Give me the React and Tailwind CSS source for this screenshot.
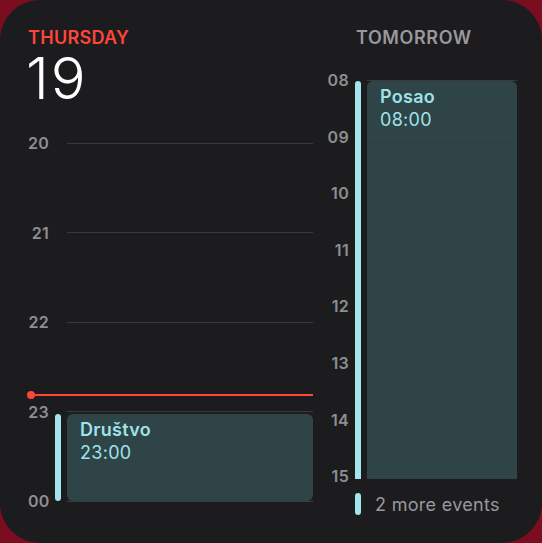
import React from 'react';

const leftHours = ['20', '21', '22', '23', '00'];
const rightHours = ['08', '09', '10', '11', '12', '13', '14', '15'];

const HourRow = ({ label, height, labelWidth, gap, isLast }) => (
  <div className={isLast ? 'h-[20px]' : height}>
    <div className="h-[20px] flex items-center">
      <span
        className={`${labelWidth} text-right text-[16px] font-semibold text-[#8e8e93] leading-none tracking-[0.3px]`}
      >
        {label}
      </span>
      <div className={`flex-1 h-px bg-[#3a3a3c] ${gap}`} />
    </div>
  </div>
);

const EventBlock = ({ title, time, className, barClass, boxClass }) => (
  <div className={`absolute flex ${className}`}>
    <div className={`w-[6px] bg-[#a2e5ec] ${barClass}`} />
    <div className={`flex-1 ml-[6px] bg-[#31494b]/90 pl-[13px] pt-[4px] ${boxClass}`}>
      <div className="text-[18px] leading-[23px] font-semibold tracking-[0.3px] text-[#9fe2ea]">{title}</div>
      <div className="text-[18px] leading-[23px] tracking-[0.3px] text-[#9fe2ea]">{time}</div>
    </div>
  </div>
);

export default function App() {
  return (
    <div className="w-[542px] h-[543px] bg-[#7a0d1f]">
      <div
        className="w-full h-full rounded-[40px] bg-[#1c1c1e] flex pl-[28px] pr-[25px] pt-[28px]"
        style={{ fontFamily: 'Inter, "Noto Sans", sans-serif' }}
      >
        {/* today */}
        <div className="w-[285px] flex flex-col">
          <div className="text-[18px] leading-[20px] font-semibold text-[#ff453a] tracking-[0.3px]">
            THURSDAY
          </div>
          <div className="mt-[5px] text-[58px] leading-[50px] font-light text-white tracking-[2px] -ml-[2px]">
            19
          </div>
          <div className="relative mt-[30px]">
            {leftHours.map((h, i) => (
              <HourRow
                key={h}
                label={h}
                height="h-[89.6px]"
                labelWidth="w-[21px]"
                gap="ml-[18px]"
                isLast={i === leftHours.length - 1}
              />
            ))}
            <div className="absolute left-[-1px] right-0 top-[258px] flex items-center">
              <div className="w-[8px] h-[8px] rounded-full bg-[#ff453a]" />
              <div className="flex-1 h-[2px] bg-[#ff453a]" />
            </div>
            <EventBlock
              title="Društvo"
              time="23:00"
              className="left-[27px] right-0 top-[281px] h-[87px]"
              barClass="rounded-full"
              boxClass="rounded-[6px]"
            />
          </div>
        </div>

        {/* tomorrow */}
        <div className="ml-[14px] flex-1 flex flex-col">
          <div className="pl-[29px] text-[18px] leading-[20px] font-semibold tracking-[0.6px] text-[#98989d]">
            TOMORROW
          </div>
          <div className="relative mt-[22px]">
            {rightHours.map((h, i) => (
              <HourRow
                key={h}
                label={h}
                height="h-[56.6px]"
                labelWidth="w-[22px]"
                gap="ml-[18px]"
                isLast={i === rightHours.length - 1}
              />
            ))}
            <EventBlock
              title="Posao"
              time="08:00"
              className="left-[28px] right-0 top-[11px] h-[398px]"
              barClass="rounded-t-full"
              boxClass="rounded-t-[6px]"
            />
          </div>
          <div className="mt-[7px] h-[22px] flex items-center pl-[28px]">
            <div className="w-[6px] h-[22px] rounded-full bg-[#a2e5ec]" />
            <span className="ml-[14px] text-[18px] tracking-[0.3px] text-[#98989d]">2 more events</span>
          </div>
        </div>
      </div>
    </div>
  );
}
